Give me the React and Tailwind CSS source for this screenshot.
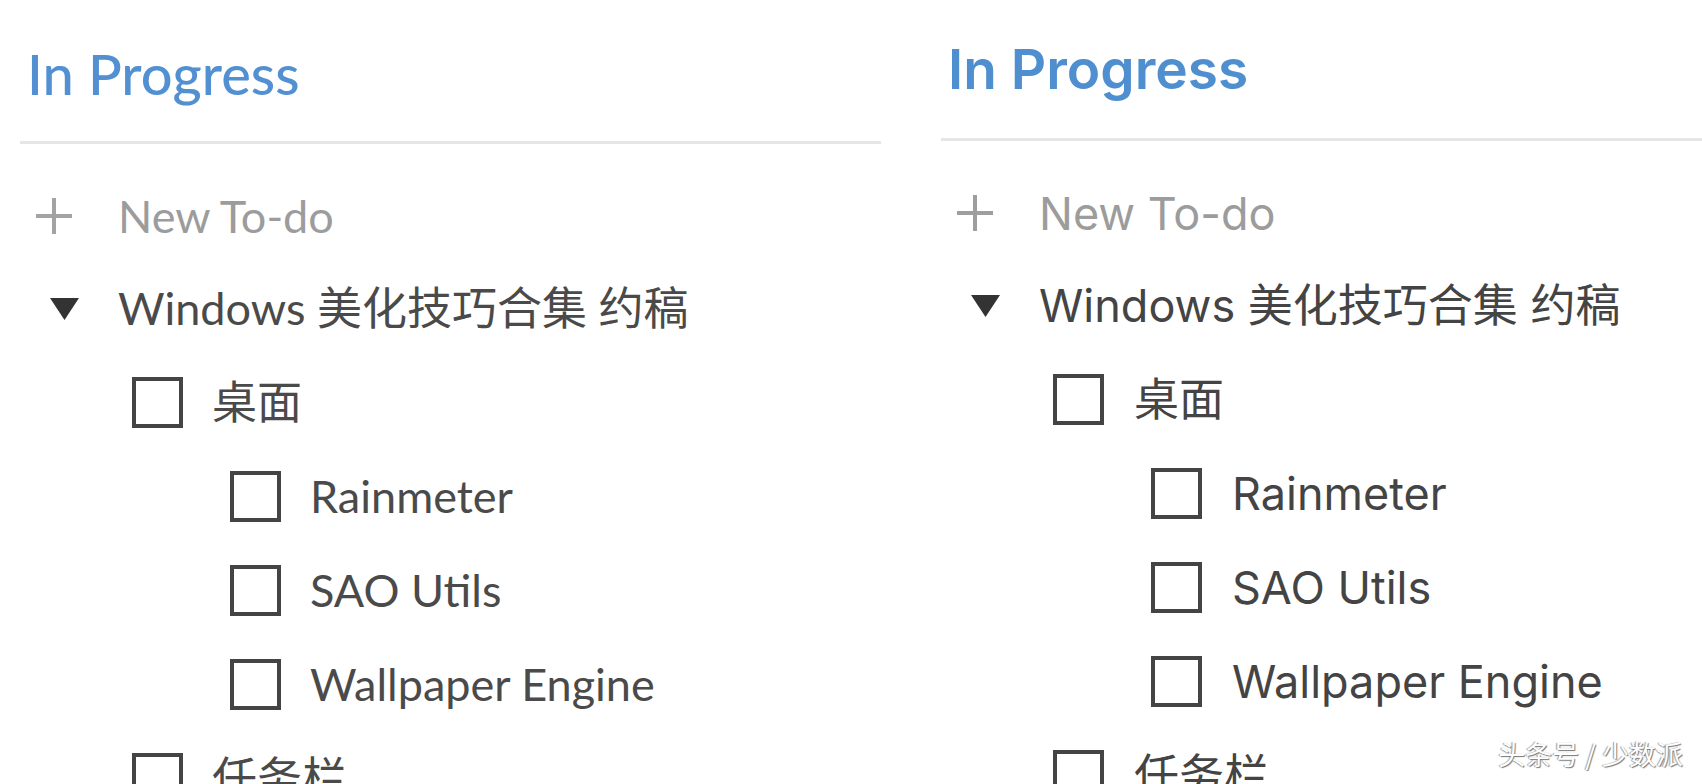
import React from 'react';

const items = [
  { level: 1, text: '桌面' },
  { level: 2, text: 'Rainmeter' },
  { level: 2, text: 'SAO Utils' },
  { level: 2, text: 'Wallpaper Engine' },
  { level: 1, text: '任务栏' },
];

const Plus = ({ color }) => (
  <svg width="40" height="40" viewBox="0 0 40 40">
    <path d="M20 2v36M2 20h36" stroke={color} strokeWidth="4" />
  </svg>
);

const Triangle = ({ color }) => (
  <svg width="29" height="22" viewBox="0 0 29 22">
    <path d="M0 0h29L14.5 22z" fill={color} />
  </svg>
);

const Pane = ({ win }) => {
  const font = win
    ? "font-['Lato','Noto_Sans_CJK_SC',sans-serif]"
    : "font-['Inter','Noto_Sans_CJK_SC',sans-serif]";
  const body = win ? 'text-[45px] text-[#4a4a4a]' : 'text-[45px] text-[#444]';

  return (
    <div className={`flex flex-col ${font}`}>
      <div
        className={
          win
            ? 'h-[141px] flex items-start pl-[7px] pt-[46px]'
            : 'h-[138px] flex items-start pl-[7px] pt-[42px]'
        }
      >
        <h2
          className={
            win
              ? 'text-[56px] leading-none font-medium text-[#5290d2]'
              : 'text-[55px] leading-none font-semibold text-[#4f8fd0]'
          }
        >
          In Progress
        </h2>
      </div>
      <div className="h-[3px] bg-[#e6e6e6]" />

      <div className="pt-[26px] flex flex-col">
        <div className="h-[92px] flex items-center">
          <div className="w-[98px] pl-[14px]">
            <Plus color={win ? '#a3a3a3' : '#9e9e9e'} />
          </div>
          <span className={`${body} leading-none !text-[#9c9c9c]`}>New To-do</span>
        </div>

        <div className="h-[93px] flex items-center">
          <div className="w-[98px] pl-[30px]">
            <Triangle color="#333" />
          </div>
          <span className={`${body} leading-none`}>Windows 美化技巧合集 约稿</span>
        </div>

        {items.map((item, i) => (
          <div
            key={i}
            className="h-[94px] flex items-center"
            style={{ paddingLeft: item.level * 98 }}
          >
            <div className="ml-[14px] w-[51px] h-[51px] border-[4px] border-[#444] shrink-0" />
            <span className={`${body} leading-none ${win ? 'ml-[29px]' : 'ml-[30px]'}`}>
              {item.text}
            </span>
          </div>
        ))}
      </div>
    </div>
  );
};

export default function App() {
  return (
    <div className="relative w-[1702px] h-[784px] overflow-hidden bg-white flex">
      <div className="ml-[20px] w-[861px]">
        <Pane win />
      </div>
      <div className="ml-[60px] flex-1">
        <Pane />
      </div>
      <div className="absolute right-[19px] bottom-[10px] text-[27px] text-white font-['Noto_Sans_CJK_SC',sans-serif] [text-shadow:1px_1px_1px_#777,-1px_0_1px_#999]">
        头条号 / 少数派
      </div>
    </div>
  );
}
